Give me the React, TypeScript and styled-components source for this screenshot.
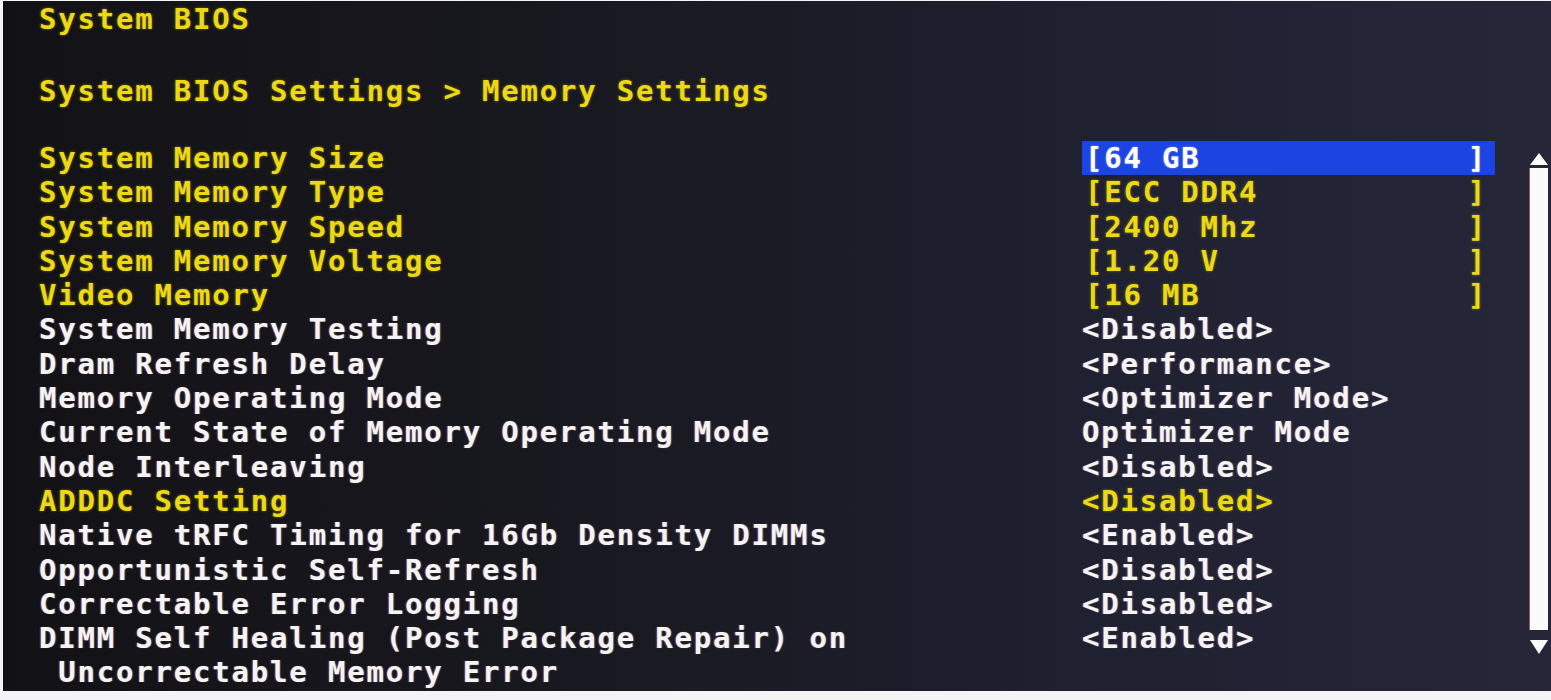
import React from "react";
import styled, { createGlobalStyle } from "styled-components";

const Global = createGlobalStyle`
  html, body { margin: 0; padding: 0; background: #f4f4f6; }
  body { width: 1551px; height: 700px; overflow: hidden; }
`;

const YELLOW = "#ecd914";
const WHITE = "#f6f4f2";

const Screen = styled.div`
  margin: 1px 0 0 3px;
  height: 690px;
  background: linear-gradient(90deg, #121216 0%, #18181f 35%, #1f2030 70%, #252738 100%);
  font-family: "DejaVu Sans Mono", "Liberation Mono", monospace;
  font-weight: 700;
  font-size: 29px;
  letter-spacing: 1.8px;
  display: flex;
  flex-direction: column;
  padding: 1px 0 0 36px;
  box-sizing: border-box;
`;

const Heading = styled.div<{ $gap: number }>`
  color: ${YELLOW};
  height: 34px;
  line-height: 34px;
  margin-top: ${(p) => p.$gap}px;
  white-space: pre;
  text-shadow: 0 0 3px rgba(236, 217, 20, 0.45);
`;

const Main = styled.div`
  display: flex;
  margin-top: 33px;
`;

const List = styled.div`
  display: grid;
  grid-template-columns: 1043px 432px;
  grid-auto-rows: auto;
`;

const Label = styled.div<{ $yellow?: boolean }>`
  color: ${(p) => (p.$yellow ? YELLOW : WHITE)};
  line-height: 34.3px;
  white-space: pre;
  text-shadow: ${(p) =>
    p.$yellow
      ? "0 0 3px rgba(236,217,20,0.45)"
      : "-1px 0 1px rgba(255,120,120,0.35), 1px 0 1px rgba(120,200,255,0.35)"};
`;

const Value = styled.div<{ $yellow?: boolean }>`
  color: ${(p) => (p.$yellow ? YELLOW : WHITE)};
  line-height: 34.3px;
  height: 34.3px;
  white-space: pre;
  text-shadow: ${(p) =>
    p.$yellow
      ? "0 0 3px rgba(236,217,20,0.45)"
      : "-1px 0 1px rgba(255,120,120,0.35), 1px 0 1px rgba(120,200,255,0.35)"};
`;

const Field = styled.div<{ $selected?: boolean }>`
  display: flex;
  justify-content: space-between;
  width: 413px;
  box-sizing: border-box;
  padding: 0 8px 0 3px;
  line-height: 34.3px;
  height: 34.3px;
  white-space: pre;
  background: ${(p) => (p.$selected ? "#1c44e2" : "transparent")};
  color: ${(p) => (p.$selected ? "#ffffff" : YELLOW)};
  text-shadow: ${(p) => (p.$selected ? "0 0 2px rgba(255,255,255,0.5)" : "0 0 3px rgba(236,217,20,0.45)")};
`;

const Scroll = styled.div`
  margin-left: 16px;
  margin-top: 12px;
  width: 18px;
  display: flex;
  flex-direction: column;
  align-items: center;
`;

const Track = styled.div`
  width: 18px;
  height: 462px;
  margin: 3px 0 10px;
  background: #fbfbfb;
  box-shadow: -1px 0 0 rgba(255, 110, 110, 0.6);
`;

const Arrow = styled.svg`
  display: block;
`;

type Row = {
  label: string;
  value: string;
  yellow?: boolean;
  field?: boolean;
  selected?: boolean;
  extra?: string;
};

const rows: Row[] = [
  { label: "System Memory Size", value: "[64 GB", yellow: true, field: true, selected: true },
  { label: "System Memory Type", value: "[ECC DDR4", yellow: true, field: true },
  { label: "System Memory Speed", value: "[2400 Mhz", yellow: true, field: true },
  { label: "System Memory Voltage", value: "[1.20 V", yellow: true, field: true },
  { label: "Video Memory", value: "[16 MB", yellow: true, field: true },
  { label: "System Memory Testing", value: "<Disabled>" },
  { label: "Dram Refresh Delay", value: "<Performance>" },
  { label: "Memory Operating Mode", value: "<Optimizer Mode>" },
  { label: "Current State of Memory Operating Mode", value: "Optimizer Mode" },
  { label: "Node Interleaving", value: "<Disabled>" },
  { label: "ADDDC Setting", value: "<Disabled>", yellow: true },
  { label: "Native tRFC Timing for 16Gb Density DIMMs", value: "<Enabled>" },
  { label: "Opportunistic Self-Refresh", value: "<Disabled>" },
  { label: "Correctable Error Logging", value: "<Disabled>" },
  {
    label: "DIMM Self Healing (Post Package Repair) on",
    value: "<Enabled>",
    extra: " Uncorrectable Memory Error",
  },
];

export default function App() {
  return (
    <>
      <Global />
      <Screen>
        <Heading $gap={0}>System BIOS</Heading>
        <Heading $gap={38}>System BIOS Settings &gt; Memory Settings</Heading>
        <Main>
          <List>
            {rows.map((r) => (
              <React.Fragment key={r.label}>
                <Label $yellow={r.yellow}>
                  {r.label}
                  {r.extra ? "\n" + r.extra : ""}
                </Label>
                {r.field ? (
                  <Field $selected={r.selected}>
                    <span>{r.value}</span>
                    <span>]</span>
                  </Field>
                ) : (
                  <Value $yellow={r.yellow}>{r.value}</Value>
                )}
              </React.Fragment>
            ))}
          </List>
          <Scroll>
            <Arrow width="18" height="12" viewBox="0 0 18 12">
              <polygon points="9,0 18,12 0,12" fill="#fbfbfb" />
            </Arrow>
            <Track />
            <Arrow width="18" height="14" viewBox="0 0 18 14">
              <polygon points="0,0 18,0 9,14" fill="#fbfbfb" />
            </Arrow>
          </Scroll>
        </Main>
      </Screen>
    </>
  );
}
